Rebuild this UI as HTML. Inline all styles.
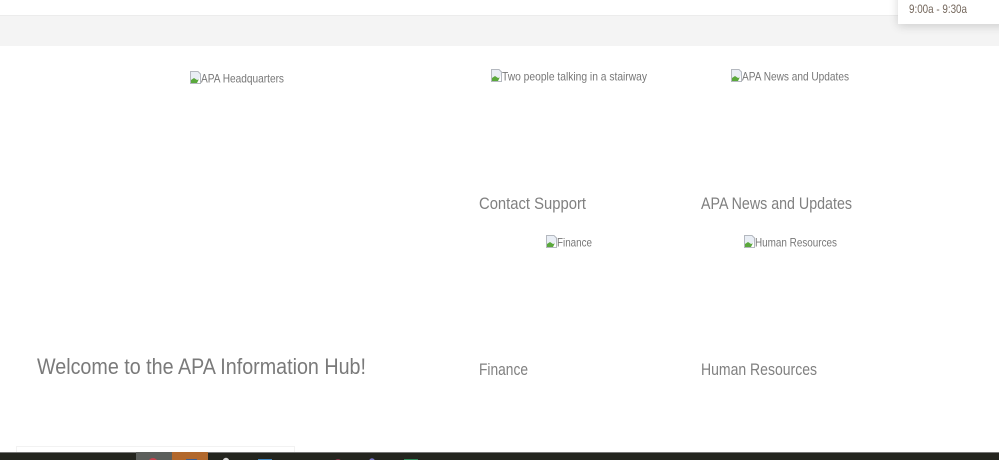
<!DOCTYPE html>
<html>
<head>
<meta charset="utf-8">
<style>
html,body{margin:0;padding:0;width:999px;height:460px;overflow:hidden;background:#fff}
svg{display:block;position:absolute;left:0;top:0}
text{font-family:"Liberation Sans",sans-serif}
.h{font-size:16.500px;fill:#808080}
.a{font-size:12px;fill:#777}
</style>
</head>
<body>
<svg width="999" height="460" viewBox="0 0 999 460" xmlns="http://www.w3.org/2000/svg">
<defs>
<filter id="blur" x="-30%" y="-60%" width="160%" height="220%"><feGaussianBlur stdDeviation="5"/></filter>
<clipPath id="top"><rect x="0" y="0" width="999" height="46"/></clipPath>
<symbol id="b" viewBox="0 0 11 13">
<path d="M.5.5H8L10.500 3V12.500H.5Z" fill="#e9eef5" stroke="#b4b8bf"/>
<path d="M1 12V9L4 7 7 9 10 8V12Z" fill="#5aa83c"/>
<path d="M7 12L10 6V12Z" fill="#fff"/>
</symbol>
</defs>
<rect x="0" y="16" width="999" height="30" fill="#f4f4f4"/>
<rect x="0" y="15" width="898" height="1" fill="#ececec"/>
<g clip-path="url(#top)"><rect x="898" y="-10" width="110" height="36" fill="#000" opacity=".16" filter="url(#blur)"/></g>
<rect x="898" y="0" width="101" height="24" fill="#fff"/>
<text x="909" y="13" font-size="12" fill="#74675c" textLength="58" lengthAdjust="spacingAndGlyphs">9:00a - 9:30a</text>

<use href="#b" x="190" y="71" width="11" height="13"/>
<text class="a" x="201" y="82.500" textLength="83" lengthAdjust="spacingAndGlyphs">APA Headquarters</text>
<use href="#b" x="491" y="69" width="11" height="13"/>
<text class="a" x="502" y="80.500" textLength="145" lengthAdjust="spacingAndGlyphs">Two people talking in a stairway</text>
<use href="#b" x="731" y="69" width="11" height="13"/>
<text class="a" x="742" y="80.500" textLength="107" lengthAdjust="spacingAndGlyphs">APA News and Updates</text>
<use href="#b" x="546" y="235" width="11" height="13"/>
<text class="a" x="557" y="246.500" textLength="35" lengthAdjust="spacingAndGlyphs">Finance</text>
<use href="#b" x="744" y="235" width="11" height="13"/>
<text class="a" x="755" y="246.500" textLength="82" lengthAdjust="spacingAndGlyphs">Human Resources</text>

<text class="h" x="479" y="209" textLength="107" lengthAdjust="spacingAndGlyphs">Contact Support</text>
<text class="h" x="701" y="209" textLength="151" lengthAdjust="spacingAndGlyphs">APA News and Updates</text>
<text class="h" x="479" y="375" textLength="49" lengthAdjust="spacingAndGlyphs">Finance</text>
<text class="h" x="701" y="375" textLength="116" lengthAdjust="spacingAndGlyphs">Human Resources</text>
<text x="37" y="374" font-size="22.500" fill="#7a7a7a" textLength="329" lengthAdjust="spacingAndGlyphs">Welcome to the APA Information Hub!</text>

<path d="M16.500 452V446.500H294.500V452" fill="none" stroke="#f2f2f2"/>
<rect x="0" y="452" width="999" height="8" fill="#24251f"/>
<rect x="0" y="452" width="999" height="1" fill="#777"/>
<rect x="136" y="452" width="36" height="8" fill="#5c5f5c"/>
<rect x="172" y="452" width="36" height="8" fill="#b2682c"/>
<circle cx="153" cy="463" r="5" fill="#c8434f"/>
<rect x="186" y="459" width="11" height="1" fill="#3f5f8f"/>
<circle cx="226" cy="461" r="3.200" fill="#d8d8d8"/>
<rect x="258" y="459" width="14" height="1" fill="#3f86c0"/>
<circle cx="338" cy="463" r="4" fill="#8a3045"/>
<circle cx="372" cy="461" r="2.800" fill="#7a78c8"/>
<rect x="404" y="459" width="14" height="1" fill="#2f8a5a"/>
</svg>
</body>
</html>
